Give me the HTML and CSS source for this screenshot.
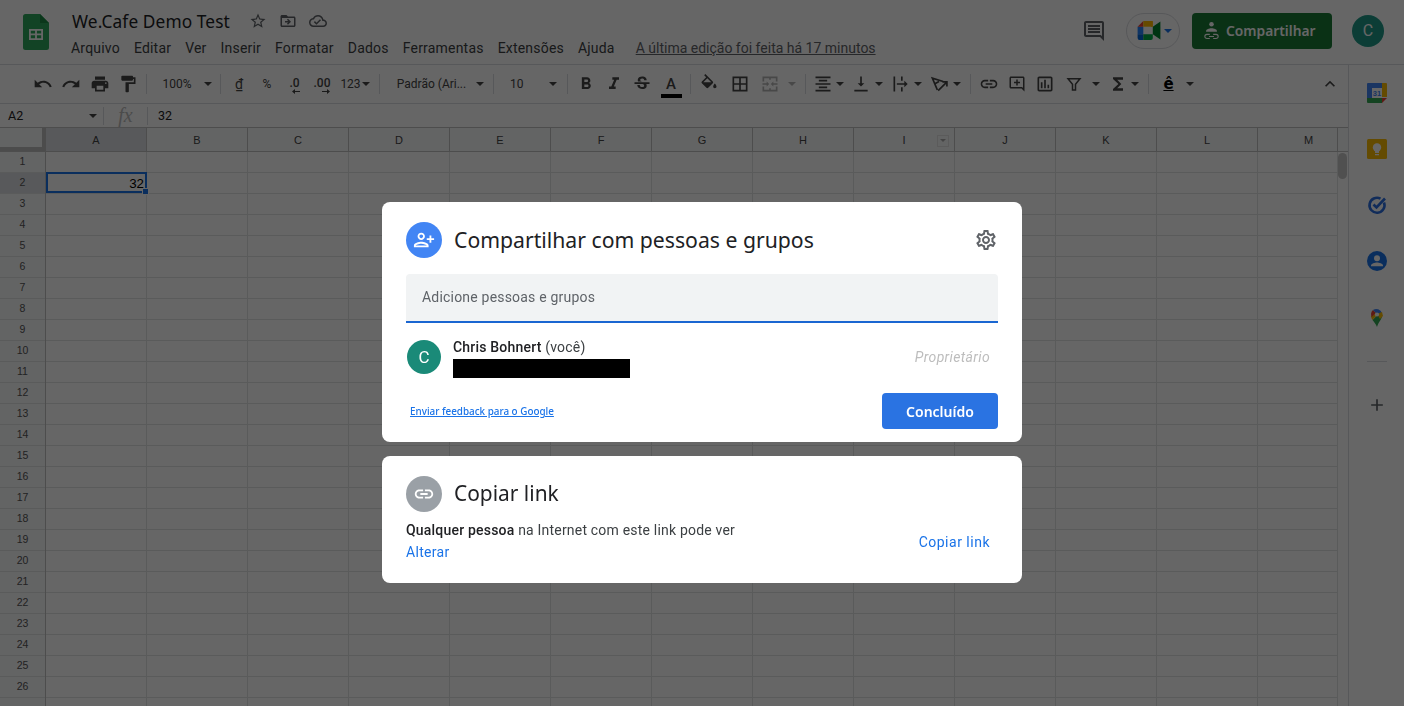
FILE: index.html
```html
<!DOCTYPE html>
<html lang="pt-BR">
<head>
<meta charset="utf-8">
<title>We.Cafe Demo Test</title>
<link rel="stylesheet" href="styles.css">
</head>
<body>
<div class="app">
  <header class="top">
    <svg class="logo" viewBox="0 0 26 36"><path fill="#2ea85c" d="M2.500 0H17l9 9v24.500a2.500 2.500 0 0 1-2.500 2.500h-21A2.500 2.500 0 0 1 0 33.500v-31A2.500 2.500 0 0 1 2.500 0z"/><path fill="#1d8a45" d="M17 0l9 9h-9z"/><path fill="#fff" fill-rule="evenodd" d="M6 15h14v11H6zm1.800 1.800v2.800h4.300v-2.800zm6.100 0v2.800h4.300v-2.800zm-6.100 4.500v3h4.300v-3zm6.100 0v3h4.300v-3z"/></svg>
    <div class="doc">
      <div class="doc-title">
        <span class="doc-name">We.Cafe Demo Test</span>
        <svg class="ti first" viewBox="0 0 24 24"><path d="M22 9.240l-7.190-.62L12 2 9.190 8.630 2 9.240l5.460 4.730L5.820 21 12 17.270 18.180 21l-1.630-7.030L22 9.240zM12 15.400l-3.760 2.270 1-4.280-3.320-2.880 4.380-.38L12 6.100l1.710 4.040 4.380.38-3.320 2.880 1 4.280L12 15.400z"/></svg>
        <svg class="ti" viewBox="0 0 24 24"><path d="M20 6h-8l-2-2H4c-1.100 0-2 .9-2 2v12c0 1.100.9 2 2 2h16c1.100 0 2-.9 2-2V8c0-1.100-.9-2-2-2zm0 12H4V8h16v10zm-8.010-9l-1.410 1.410L12.160 12H8v2h4.160l-1.590 1.590L11.990 17 16 13.010 11.990 9z"/></svg>
        <svg class="ti" viewBox="0 0 24 24"><path d="M19.350 10.040C18.670 6.590 15.640 4 12 4 9.110 4 6.600 5.640 5.350 8.040 2.340 8.360 0 10.910 0 14c0 3.310 2.690 6 6 6h13c2.760 0 5-2.240 5-5 0-2.640-2.050-4.780-4.650-4.960zM19 18H6c-2.210 0-4-1.790-4-4 0-2.050 1.530-3.760 3.560-3.970l1.070-.11.5-.95C8.080 7.140 9.940 6 12 6c2.620 0 4.880 1.860 5.390 4.430l.3 1.500 1.530.11c1.560.1 2.780 1.410 2.780 2.960 0 1.650-1.350 3-3 3zm-9-3.820l-2.090-2.090L6.500 13.500 10 17l6.010-6.010-1.410-1.410z"/></svg>
      </div>
      <nav class="menu">
        <span>Arquivo</span><span>Editar</span><span>Ver</span><span>Inserir</span><span>Formatar</span><span>Dados</span><span>Ferramentas</span><span>Extensões</span><span>Ajuda</span>
        <span class="last-edit">A última edição foi feita há 17 minutos</span>
      </nav>
    </div>
    <div class="top-right">
      <svg class="comments" viewBox="0 0 24 24"><path d="M21.990 4c0-1.100-.89-2-1.990-2H4c-1.100 0-2 .9-2 2v12c0 1.100.9 2 2 2h14l4 4-.01-18zM20 4v13.170L18.830 16H4V4h16zM6 12h12v2H6zm0-3h12v2H6zm0-3h12v2H6z"/></svg>
      <div class="meet">
        <svg class="meet-icon" viewBox="0 0 24 20"><path fill="#2684fc" d="M0 6h6v8H0z"/><path fill="#ea4335" d="M6 0v6H0z"/><path fill="#ffba00" d="M6 0h10v6H6z"/><path fill="#0066da" d="M0 14h6v6H2a2 2 0 0 1-2-2z"/><path fill="#00ac47" d="M6 14h10v4a2 2 0 0 1-2 2H6z"/><path fill="#00832d" d="M16 6l8-5.500v19L16 14z"/><path fill="#ffba00" d="M14 0a2 2 0 0 1 2 2v4h-2z"/></svg>
        <span class="meet-caret"></span>
      </div>
      <button class="share">
        <svg class="share-icon" viewBox="0 0 20 24"><circle cx="10" cy="4" r="2.700"/><path d="M3.500 12c0-2 3.500-3.300 6.500-3.300s6.500 1.300 6.500 3.300v1h-13z"/><path fill="none" stroke="#fff" stroke-width="1.300" d="M8 16H4.500a2.500 2.500 0 0 0 0 5H8m4-5h3.500a2.500 2.500 0 0 1 0 5H12m-5-2.500h6"/></svg>
        Compartilhar
      </button>
      <div class="avatar top-avatar">C</div>
    </div>
  </header>

  <div class="main">
    <div class="sheet">
      <div class="toolbar">
        <svg class="i" viewBox="0 0 24 24"><path d="M12.500 8c-2.650 0-5.050.99-6.900 2.600L2 7v9h9l-3.620-3.620c1.390-1.160 3.160-1.880 5.120-1.880 3.540 0 6.550 2.310 7.600 5.500l2.370-.78C21.080 11.030 17.150 8 12.500 8z"/></svg>
        <svg class="i" viewBox="0 0 24 24"><path d="M18.400 10.600C16.550 8.990 14.150 8 11.500 8c-4.650 0-8.580 3.030-9.960 7.220L3.900 16c1.050-3.190 4.050-5.500 7.600-5.500 1.950 0 3.730.72 5.120 1.880L13 16h9V7l-3.600 3.600z"/></svg>
        <svg class="i" viewBox="0 0 24 24"><path d="M19 8H5c-1.660 0-3 1.340-3 3v6h4v4h12v-4h4v-6c0-1.660-1.340-3-3-3zm-3 11H8v-5h8v5zm3-7c-.55 0-1-.45-1-1s.45-1 1-1 1 .45 1 1-.45 1-1 1zm-1-9H6v4h12V3z"/></svg>
        <svg class="i" viewBox="0 0 24 24"><path d="M18 4V3c0-.55-.45-1-1-1H5c-.55 0-1 .45-1 1v4c0 .55.45 1 1 1h12c.55 0 1-.45 1-1V6h1v4H9v11c0 .55.45 1 1 1h2c.55 0 1-.45 1-1v-9h8V4h-3z"/></svg>
        <span class="sep"></span>
        <span class="t">100%</span>
        <span class="caret"></span>
        <span class="sep"></span>
        <span class="t under">₫</span>
        <span class="t">%</span>
        <span class="dec"><span>.0</span><svg viewBox="0 0 8 5"><path d="M8 2H3V0L0 2.500 3 5V3h5z"/></svg></span>
        <span class="dec"><span>.00</span><svg viewBox="0 0 8 5"><path d="M0 2h5V0l3 2.500L5 5V3H0z"/></svg></span>
        <span class="t num">123<span class="caret"></span></span>
        <span class="sep"></span>
        <span class="t">Padrão (Ari...</span>
        <span class="caret"></span>
        <span class="sep"></span>
        <span class="size"><span>10</span><span class="caret"></span></span>
        <span class="sep"></span>
        <svg class="i" viewBox="0 0 24 24"><path d="M15.600 10.790c.97-.67 1.650-1.770 1.650-2.790 0-2.260-1.750-4-4-4H7v14h7.040c2.090 0 3.710-1.700 3.710-3.790 0-1.520-.86-2.820-2.150-3.420zM10 6.500h3c.83 0 1.500.67 1.500 1.500s-.67 1.500-1.500 1.500h-3v-3zm3.500 9H10v-3h3.500c.83 0 1.500.67 1.500 1.500s-.67 1.500-1.500 1.500z"/></svg>
        <svg class="i" viewBox="0 0 24 24"><path d="M10 4v3h2.210l-3.420 8H6v3h8v-3h-2.210l3.420-8H18V4z"/></svg>
        <svg class="i" viewBox="0 0 24 24"><path d="M6.850 7.080C6.850 4.370 9.450 3 12.240 3c1.640 0 3 .49 3.900 1.280.77.65 1.460 1.730 1.460 3.240h-3.010c0-.31-.05-.59-.15-.85-.29-.86-1.200-1.280-2.250-1.280-1.860 0-2.340 1.020-2.340 1.700 0 .48.25.88.74 1.210.38.25.77.48 1.410.7H7.390c-.21-.34-.54-.89-.54-1.920zM21 12v-2H3v2h9.620c1.150.45 1.960.75 1.960 1.970 0 1-.81 1.670-2.280 1.670-1.540 0-2.930-.54-2.930-2.520H6.400c0 .55.08 1.130.24 1.580.81 2.290 3.290 3.300 5.670 3.300 2.270 0 5.300-.89 5.300-4.050 0-.3-.01-1.160-.48-1.940H21V12z"/></svg>
        <span class="text-color"><span>A</span><i></i></span>
        <span class="sep"></span>
        <svg class="i" viewBox="0 0 24 24"><path d="M16.560 8.940L7.620 0 6.210 1.410l2.380 2.380-5.150 5.150c-.59.59-.59 1.540 0 2.120l5.500 5.500c.29.29.68.44 1.060.44s.77-.15 1.060-.44l5.500-5.500c.59-.58.59-1.530 0-2.120zM5.210 10L10 5.210 14.790 10H5.210zM19 11.500s-2 2.170-2 3.500c0 1.100.9 2 2 2s2-.9 2-2c0-1.330-2-3.500-2-3.500z"/></svg>
        <svg class="i" viewBox="0 0 24 24"><path d="M3 3v18h18V3H3zm8 16H5v-6h6v6zm0-8H5V5h6v6zm8 8h-6v-6h6v6zm0-8h-6V5h6v6z"/></svg>
        <svg class="i off" viewBox="0 0 24 24"><path d="M3 3h18v6h-2V5H5v4H3zM3 15h2v4h14v-4h2v6H3zM3 11h5V9l3 3-3 3v-2H3zM21 11h-5V9l-3 3 3 3v-2h5zM11 3h2v4h-2zM11 17h2v4h-2z"/></svg>
        <span class="caret off"></span>
        <span class="sep"></span>
        <svg class="i" viewBox="0 0 24 24"><path d="M7 15v2h10v-2H7zm-4 6h18v-2H3v2zm0-8h18v-2H3v2zm4-6v2h10V7H7zM3 3v2h18V3H3z"/></svg>
        <span class="caret"></span>
        <svg class="i" viewBox="0 0 24 24"><path d="M16 11h-3V3h-2v8H8l4 4 4-4zM4 19v2h16v-2H4z"/></svg>
        <span class="caret"></span>
        <svg class="i" viewBox="0 0 24 24"><path d="M3 3h2v18H3zM12 3h2v5h-2zM12 16h2v5h-2zM7 11h9V8l4 4-4 4v-3H7z"/></svg>
        <span class="caret"></span>
        <svg class="i nudge" viewBox="0 0 24 24"><path class="stroke" d="M10 19L4 5l13 4M6.500 12l5.500-3M11 20L21 10M16 9.500h5.500V15"/></svg>
        <span class="caret"></span>
        <span class="sep"></span>
        <svg class="i" viewBox="0 0 24 24"><path d="M3.900 12c0-1.710 1.390-3.100 3.100-3.100h4V7H7c-2.760 0-5 2.240-5 5s2.240 5 5 5h4v-1.900H7c-1.710 0-3.100-1.390-3.100-3.100zM8 13h8v-2H8v2zm9-6h-4v1.900h4c1.710 0 3.100 1.390 3.100 3.100s-1.390 3.100-3.100 3.100h-4V17h4c2.760 0 5-2.240 5-5s-2.240-5-5-5z"/></svg>
        <svg class="i i-sm" viewBox="0 0 24 24"><path d="M21.990 4c0-1.100-.89-2-1.990-2H4c-1.100 0-2 .9-2 2v12c0 1.100.9 2 2 2h14l4 4-.01-18zM20 4v13.170L18.830 16H4V4h16zM11 6h2v3h3v2h-3v3h-2v-3H8V9h3z"/></svg>
        <svg class="i" viewBox="0 0 24 24"><path d="M19 3H5c-1.100 0-2 .9-2 2v14c0 1.100.9 2 2 2h14c1.100 0 2-.9 2-2V5c0-1.100-.9-2-2-2zm0 16H5V5h14v14zM7 10h2v7H7zm4-3h2v10h-2zm4 6h2v4h-2z"/></svg>
        <svg class="i i-sm" viewBox="0 0 24 24"><path class="stroke" d="M4 5h16l-6 7.500V20h-4v-7.500z"/></svg>
        <span class="caret"></span>
        <svg class="i nudge-lg" viewBox="0 0 24 24"><path d="M18 4H6v2l6.500 6L6 18v2h12v-3h-7l5-5-5-5h7z"/></svg>
        <span class="caret"></span>
        <span class="sep"></span>
        <span class="t accent">ê</span>
        <span class="caret"></span>
        <svg class="i chevron" viewBox="0 0 24 24"><path d="M12 8l-6 6 1.410 1.410L12 10.830l4.590 4.580L18 14z"/></svg>
      </div>

      <div class="formula">
        <span class="cell-ref">A2</span>
        <span class="caret"></span>
        <span class="fsep"></span>
        <span class="fx">fx</span>
        <span class="fsep"></span>
        <span class="fval">32</span>
      </div>

      <div class="columns">
        <div class="corner"></div>
        <div class="col active">A</div><div class="col">B</div><div class="col">C</div><div class="col">D</div><div class="col">E</div><div class="col">F</div><div class="col">G</div><div class="col">H</div><div class="col">I<span class="col-menu"></span></div><div class="col">J</div><div class="col">K</div><div class="col">L</div><div class="col col-last">M</div>
        <div class="col-end"></div>
      </div>

      <div class="grid">
        <div class="rows">
          <div>1</div><div class="active">2</div><div>3</div><div>4</div><div>5</div><div>6</div><div>7</div><div>8</div><div>9</div><div>10</div><div>11</div><div>12</div><div>13</div><div>14</div><div>15</div><div>16</div><div>17</div><div>18</div><div>19</div><div>20</div><div>21</div><div>22</div><div>23</div><div>24</div><div>25</div><div>26</div>
        </div>
        <div class="cells">
          <div class="selected">32<span class="handle"></span></div>
        </div>
        <div class="scroll"><span class="thumb"></span></div>
      </div>
    </div>

    <aside class="side">
      <svg class="s" viewBox="0 0 20 20"><path fill="#4285f4" d="M1 0h14v5H5v10H0V1a1 1 0 0 1 1-1z"/><path fill="#fbbc04" d="M15 0h4a1 1 0 0 1 1 1v13h-5z"/><path fill="#34a853" d="M0 15h15v5H1a1 1 0 0 1-1-1z"/><path fill="#ea4335" d="M15 15h5l-5 5z"/><path fill="#fff" d="M5 5h10v10H5z"/><text x="10" y="13.200" class="cal">31</text></svg>
      <svg class="s" viewBox="0 0 20 20"><rect width="20" height="20" rx="1.500" fill="#fbbc04"/><circle cx="10" cy="8.500" r="4.200" fill="#fff"/><path fill="#fff" d="M8 12h4v2H8zM8 15h4v1.200H8z"/></svg>
      <svg class="s" viewBox="0 0 20 20"><path fill="none" stroke="#2b6fe0" stroke-width="2.600" d="M17 7.500a7.500 7.500 0 1 1-3.500-3.900"/><path fill="none" stroke="#2b6fe0" stroke-width="2.600" d="M6.500 9.500l3 3L18 3.500"/></svg>
      <svg class="s" viewBox="0 0 20 20"><circle cx="10" cy="10" r="10" fill="#1a73e8"/><circle cx="10" cy="7.200" r="3" fill="#fff"/><path fill="#fff" d="M4 14.500c0-2 4-3 6-3s6 1 6 3v.7H4z"/></svg>
      <svg class="s" viewBox="0 0 20 20"><path fill="#34a853" d="M10 20c-1-3-3-5-4.500-7l8-8 1.500 4c0 3-3.500 6-5 11z"/><path fill="#fbbc04" d="M5.500 13C4.500 11.700 4 10.300 4 9l4-3 2 2z"/><path fill="#ea4335" d="M4 7a6 6 0 0 1 2-4l3 3-4.500 4z"/><path fill="#4285f4" d="M6 3a6 6 0 0 1 9 3l-4 2-2-2z"/><path fill="#fbbc04" d="M10 7l5-2 1 4-3 3z"/><circle cx="10" cy="7.500" r="2.100" fill="#fff"/></svg>
      <span class="side-sep"></span>
      <svg class="side-add" viewBox="0 0 24 24"><path d="M19 13h-6v6h-2v-6H5v-2h6V5h2v6h6z"/></svg>
    </aside>
  </div>
</div>

<div class="overlay">
  <section class="card share-card">
    <div class="card-head">
      <span class="round blue"><svg viewBox="0 0 24 24"><path transform="matrix(-1 0 0 1 24 0)" d="M15 12c2.210 0 4-1.790 4-4s-1.790-4-4-4-4 1.790-4 4 1.790 4 4 4zm0-6c1.100 0 2 .9 2 2s-.9 2-2 2-2-.9-2-2 .9-2 2-2zm0 8c-2.670 0-8 1.340-8 4v2h16v-2c0-2.660-5.330-4-8-4zm-6 4c.22-.72 3.310-2 6-2 2.700 0 5.800 1.290 6 2H9zm-3-3v-3h3v-2H6V7H4v3H1v2h3v3h2z"/></svg></span>
      <h2>Compartilhar com pessoas e grupos</h2>
      <svg class="gear" viewBox="0 0 24 24"><path d="M19.430 12.980c.04-.32.07-.64.07-.98 0-.34-.03-.66-.07-.98l2.110-1.650c.19-.15.24-.42.12-.64l-2-3.460c-.09-.16-.26-.25-.44-.25-.06 0-.12.01-.17.03l-2.490 1c-.52-.4-1.080-.73-1.690-.98l-.38-2.650C14.460 2.180 14.250 2 14 2h-4c-.25 0-.46.18-.49.42l-.38 2.650c-.61.25-1.170.59-1.690.98l-2.490-1c-.06-.02-.12-.03-.18-.03-.17 0-.34.09-.43.25l-2 3.460c-.13.22-.07.49.12.64l2.110 1.650c-.04.32-.07.65-.07.98 0 .33.03.66.07.98l-2.110 1.650c-.19.15-.24.42-.12.64l2 3.460c.09.16.26.25.44.25.06 0 .12-.01.17-.03l2.490-1c.52.4 1.080.73 1.690.98l.38 2.650c.03.24.24.42.49.42h4c.25 0 .46-.18.49-.42l.38-2.650c.61-.25 1.170-.59 1.690-.98l2.490 1c.06.02.12.03.18.03.17 0 .34-.09.43-.25l2-3.460c.12-.22.07-.49-.12-.64l-2.110-1.650zm-1.980-1.710c.04.31.05.52.05.73 0 .21-.02.43-.05.73l-.14 1.130.89.7 1.080.84-.7 1.210-1.270-.51-1.040-.42-.9.68c-.43.32-.84.56-1.250.73l-1.060.43-.16 1.130-.2 1.350h-1.400l-.19-1.350-.16-1.130-1.060-.43c-.43-.18-.83-.41-1.230-.71l-.91-.7-1.060.43-1.270.51-.7-1.210 1.080-.84.89-.7-.14-1.130c-.03-.31-.05-.54-.05-.74s.02-.43.05-.73l.14-1.130-.89-.7-1.080-.84.7-1.210 1.270.51 1.040.42.9-.68c.43-.32.84-.56 1.250-.73l1.060-.43.16-1.130.2-1.350h1.390l.19 1.350.16 1.130 1.060.43c.43.18.83.41 1.230.71l.91.7 1.060-.43 1.270-.51.7 1.210-1.070.85-.89.7.14 1.130zM12 8c-2.210 0-4 1.790-4 4s1.790 4 4 4 4-1.790 4-4-1.790-4-4-4zm0 6c-1.100 0-2-.9-2-2s.9-2 2-2 2 .9 2 2-.9 2-2 2z"/></svg>
    </div>
    <div class="people-input">Adicione pessoas e grupos</div>
    <div class="person">
      <div class="avatar person-avatar">C</div>
      <div class="person-info">
        <div class="person-name"><b>Chris Bohnert</b> (você)</div>
        <div class="redacted"></div>
      </div>
      <span class="role">Proprietário</span>
    </div>
    <div class="card-foot">
      <a class="feedback">Enviar feedback para o Google</a>
      <button class="done">Concluído</button>
    </div>
  </section>

  <section class="card link-card">
    <div class="card-head">
      <span class="round gray"><svg viewBox="0 0 24 24"><path d="M3.900 12c0-1.710 1.390-3.100 3.100-3.100h4V7H7c-2.760 0-5 2.240-5 5s2.240 5 5 5h4v-1.900H7c-1.710 0-3.100-1.390-3.100-3.100zM8 13h8v-2H8v2zm9-6h-4v1.900h4c1.710 0 3.100 1.390 3.100 3.100s-1.390 3.100-3.100 3.100h-4V17h4c2.760 0 5-2.240 5-5s-2.240-5-5-5z"/></svg></span>
      <h2>Copiar link</h2>
    </div>
    <div class="link-body">
      <div class="link-info">
        <div class="link-desc"><b>Qualquer pessoa</b> na Internet com este link pode ver</div>
        <a class="change">Alterar</a>
      </div>
      <a class="copy">Copiar link</a>
    </div>
  </section>
</div>
</body>
</html>
```

FILE: styles.css
```css
* { box-sizing: border-box; }
html, body { margin: 0; height: 100%; overflow: hidden; background: #fff; }
body { font-family: Roboto, "Liberation Sans", sans-serif; color: #202124; }

.app { height: 706px; display: flex; flex-direction: column; }

/* top bar */
.top { height: 65px; flex: none; display: flex; padding-left: 23px; border-bottom: 1px solid #dadce0; }
.logo { width: 26px; height: 36px; margin-top: 14px; flex: none; }
.doc { margin-left: 23px; flex: 1; }
.doc-title { display: flex; align-items: center; height: 24px; margin-top: 9px; }
.doc-name { font-family: "Noto Sans", sans-serif; font-size: 17.300px; color: #202124; letter-spacing: 0.1px; }
.ti { width: 18px; height: 18px; fill: #5f6368; margin-left: 12px; }
.ti.first { margin-left: 19px; }
.menu { display: flex; margin-left: -1px; margin-top: 5px; height: 20px; align-items: center; font-size: 14px; letter-spacing: .2px; color: #3c4043; gap: 14px; }
.last-edit { margin-left: 7px; color: #5f6368; text-decoration: underline; letter-spacing: 0; }
.top-right { display: flex; align-items: center; width: 322px; margin-bottom: 3px; flex: none; }
.comments { width: 24px; height: 24px; fill: #5f6368; flex: none; }
.meet { width: 54px; height: 36px; margin-left: 20px; border: 1px solid #dadce0; border-radius: 18px; display: flex; align-items: center; padding-left: 10px; flex: none; }
.meet-icon { width: 24px; height: 19px; }
.meet-caret { width: 0; height: 0; margin-left: 3px; border: 4px solid transparent; border-top-color: #1a73e8; border-bottom: 0; }
.share { width: 140px; height: 36px; margin-left: 12px; background: #1a7a36; color: #fff; border: 0; border-radius: 4px; font-family: "Noto Sans", sans-serif; font-weight: 600; font-size: 13.800px; display: flex; align-items: center; padding: 0 0 0 11px; gap: 6px; flex: none; }
.share-icon { width: 17px; height: 20px; fill: #fff; }
.avatar { border-radius: 50%; background: #1a8a78; color: #fff; display: flex; align-items: center; justify-content: center; flex: none; }
.top-avatar { width: 32px; height: 32px; margin-left: 20px; font-size: 16px; background: #1f9a88; }

.main { flex: 1; display: flex; min-height: 0; }
.sheet { flex: 1; display: flex; flex-direction: column; min-width: 0; }

/* toolbar */
.toolbar { height: 39px; flex: none; padding: 0 8px 0 29px; display: grid; align-items: center; justify-items: center; border-bottom: 1px solid #dadce0; font-size: 12px; color: #444;
  grid-template-columns: 28px 28px 30px 26px 11px 50px 12px 13px 24px 32px 23px 32px 34px 15px 89px 8px 19px 57px 15px 22px 34px 22px 36px 3px 34px 28px 32px 12px 15px 19px 16px 26px 10px 34px 0 36px 6px 21px 16px 40px 16px 42px 1px 34px 10px 17px 23px 20px 1fr; }
.i { width: 20px; height: 20px; fill: #444; display: block; }
.i-sm { width: 18px; height: 18px; }
.stroke { fill: none; stroke: #444; stroke-width: 2; }
.off { opacity: .4; }
.nudge { margin-left: 6px; }
.nudge-lg { margin-left: 10px; }
.chevron { justify-self: end; }
.sep { width: 1px; height: 20px; background: #dadce0; }
.t { white-space: nowrap; color: #444; font-size: 12px; }
.under { text-decoration: underline; font-size: 14px; }
.num { display: flex; align-items: center; gap: 1px; font-size: 12px; }
.caret { display: block; width: 0; height: 0; border: 4px solid transparent; border-top-color: #444; border-bottom: 0; }
.dec { display: flex; flex-direction: column; align-items: flex-end; font-size: 12px; font-weight: 500; line-height: 12px; margin-top: 3px; color: #444; }
.dec svg { width: 8px; height: 5px; fill: #444; display: block; }
.size { justify-self: stretch; display: flex; justify-content: space-between; align-items: center; padding: 0 3px 0 7px; color: #444; }
.text-color { display: flex; flex-direction: column; align-items: center; font-size: 15px; font-weight: 500; line-height: 17px; color: #444; margin-top: 6px; }
.text-color i { display: block; width: 21px; height: 4px; background: #000; margin-top: 1px; }
.accent { font-family: "DejaVu Sans", sans-serif; font-size: 15px; color: #000; font-weight: 700; text-decoration: underline; }

/* formula bar */
.formula { height: 24px; flex: none; display: flex; align-items: center; padding-left: 8px; font-size: 12.500px; color: #222; border-bottom: 1px solid #c0c0c0; }
.cell-ref { width: 81px; }
.fsep { width: 1px; height: 18px; background: #dadce0; }
.formula .caret { margin-right: 6px; }
.fx { width: 43px; text-align: center; font-family: "Liberation Serif", serif; font-style: italic; font-size: 20px; color: #bbb; }
.fval { margin-left: 10px; }

/* column headers */
.columns { height: 24px; flex: none; display: flex; font-size: 11px; color: #444; border-bottom: 1px solid #c0c0c0; }
.corner { width: 46px; flex: none; border-right: 4px solid #bdbdbd; border-bottom: 4px solid #bdbdbd; background: #f8f9fa; }
.col { width: 101px; flex: none; display: flex; align-items: center; justify-content: center; background: #f8f9fa; border-right: 1px solid #c0c0c0; font-family: "Liberation Sans", sans-serif; position: relative; }
.col.active { background: #dcdfe3; }
.col-last { width: 79px; padding-left: 22px; border-right: 0; }
.col-end { flex: 1; background: #f8f9fa; border-left: 1px solid #c0c0c0; }
.col-menu { position: absolute; right: 5px; top: 7px; width: 12px; height: 12px; border: 1px solid #e4e4e4; }
.col-menu::after { content: ""; position: absolute; left: 2px; top: 3px; border: 3px solid transparent; border-top-color: #aaa; border-bottom: 0; }

/* grid */
.grid { flex: 1; display: flex; min-height: 0; overflow: hidden; }
.rows { width: 46px; flex: none; background: #f8f9fa; border-right: 1px solid #c0c0c0; font-family: "Liberation Sans", sans-serif; font-size: 10.500px; color: #555; overflow: hidden; }
.rows div { height: 21px; padding-bottom: 2px; display: flex; align-items: center; justify-content: center; border-bottom: 1px solid #e2e3e3; }
.rows .active { background: #dcdfe3; }
.cells { flex: 1; position: relative; background-image: linear-gradient(to right, transparent 100px, #e2e3e3 100px), linear-gradient(to bottom, transparent 20px, #e2e3e3 20px); background-size: 101px 21px; }
.selected { position: absolute; left: 0; top: 20px; width: 101px; height: 21px; border: 2px solid #1a73e8; font-family: "Liberation Sans", sans-serif; font-size: 13.300px; color: #000; text-align: right; padding-right: 1px; line-height: 19px; }
.handle { position: absolute; right: -4px; bottom: -4px; width: 7px; height: 7px; background: #1a73e8; border: 1px solid #fff; }
.scroll { width: 11px; flex: none; border-left: 1px solid #e2e3e3; padding: 1px 0 0 0; background: #fff; }
.thumb { display: block; width: 9px; height: 26px; border-radius: 5px; background: #c8c8c8; }

/* side panel */
.side { width: 56px; flex: none; border-left: 1px solid #dadce0; display: flex; flex-direction: column; align-items: center; padding-top: 18px; }
.s { width: 20px; height: 20px; margin-bottom: 36px; flex: none; }
.cal { font-family: "Liberation Sans", sans-serif; font-size: 7.500px; font-weight: 700; fill: #4285f4; text-anchor: middle; }
.side-sep { width: 20px; height: 1px; background: #dadce0; margin-top: -2px; }
.side-add { width: 20px; height: 20px; fill: #5f6368; margin-top: 33px; }

/* dialog */
.overlay { position: fixed; inset: 0; background: rgba(0, 0, 0, .6); display: flex; flex-direction: column; align-items: center; padding-top: 202px; gap: 14px; }
.card { width: 640px; background: #fff; border-radius: 8px; padding: 20px 24px 0; }
.share-card { height: 240px; }
.link-card { height: 127px; }
.card-head { display: flex; align-items: center; height: 36px; }
.round { width: 36px; height: 36px; border-radius: 50%; display: flex; align-items: center; justify-content: center; flex: none; }
.round svg { width: 22px; height: 22px; fill: #fff; }
.blue { background: #4285f4; }
.gray { background: #9aa0a6; }
h2 { margin: 0 0 2px 12px; font-family: "Noto Sans", sans-serif; font-weight: 400; font-size: 20.900px; color: #202124; flex: 1; white-space: nowrap; }
.share-card h2 { font-size: 21.200px; }
.gear { width: 24px; height: 24px; fill: #5f6368; flex: none; }
.people-input { margin-top: 16px; height: 49px; background: #f1f3f4; border-bottom: 2px solid #1a66d1; border-radius: 4px 4px 0 0; padding: 0 16px 2px; display: flex; align-items: center; font-size: 14px; letter-spacing: .2px; color: #5f6368; }
.person { display: flex; height: 48px; margin-top: 17px; padding-left: 1px; }
.person-avatar { width: 34px; height: 34px; font-size: 17px; }
.person-info { margin-left: 12px; flex: 1; margin-top: -1px; }
.person-name { font-size: 14px; letter-spacing: .2px; line-height: 17px; color: #3c4043; }
.person-name b { font-weight: 500; color: #202124; }
.redacted { width: 177px; height: 19px; background: #000; margin-top: 3px; }
.role { font-style: italic; font-size: 14px; letter-spacing: .35px; color: #bdbdbd; margin: 9px 8px 0 0; }
.card-foot { display: flex; justify-content: space-between; align-items: center; margin-top: 5px; padding-left: 4px; }
.feedback { font-family: "Noto Sans", sans-serif; font-size: 9.900px; font-weight: 500; color: #1a73e8; text-decoration: underline; }
.done { width: 116px; height: 36px; background: #2a73e2; color: #fff; border: 0; border-radius: 4px; font-family: "Noto Sans", sans-serif; font-weight: 600; font-size: 14px; padding: 0; }
.link-body { display: flex; justify-content: space-between; align-items: center; margin-top: 9px; }
.link-desc { font-size: 14px; letter-spacing: .2px; line-height: 18px; color: #3c4043; }
.link-desc b { font-weight: 500; color: #202124; }
.change { display: block; margin-top: 5px; font-size: 14px; letter-spacing: .3px; color: #1a73e8; line-height: 17px; }
.copy { font-size: 14px; letter-spacing: .5px; color: #1a73e8; margin: 2px 8px 0 0; }
```
